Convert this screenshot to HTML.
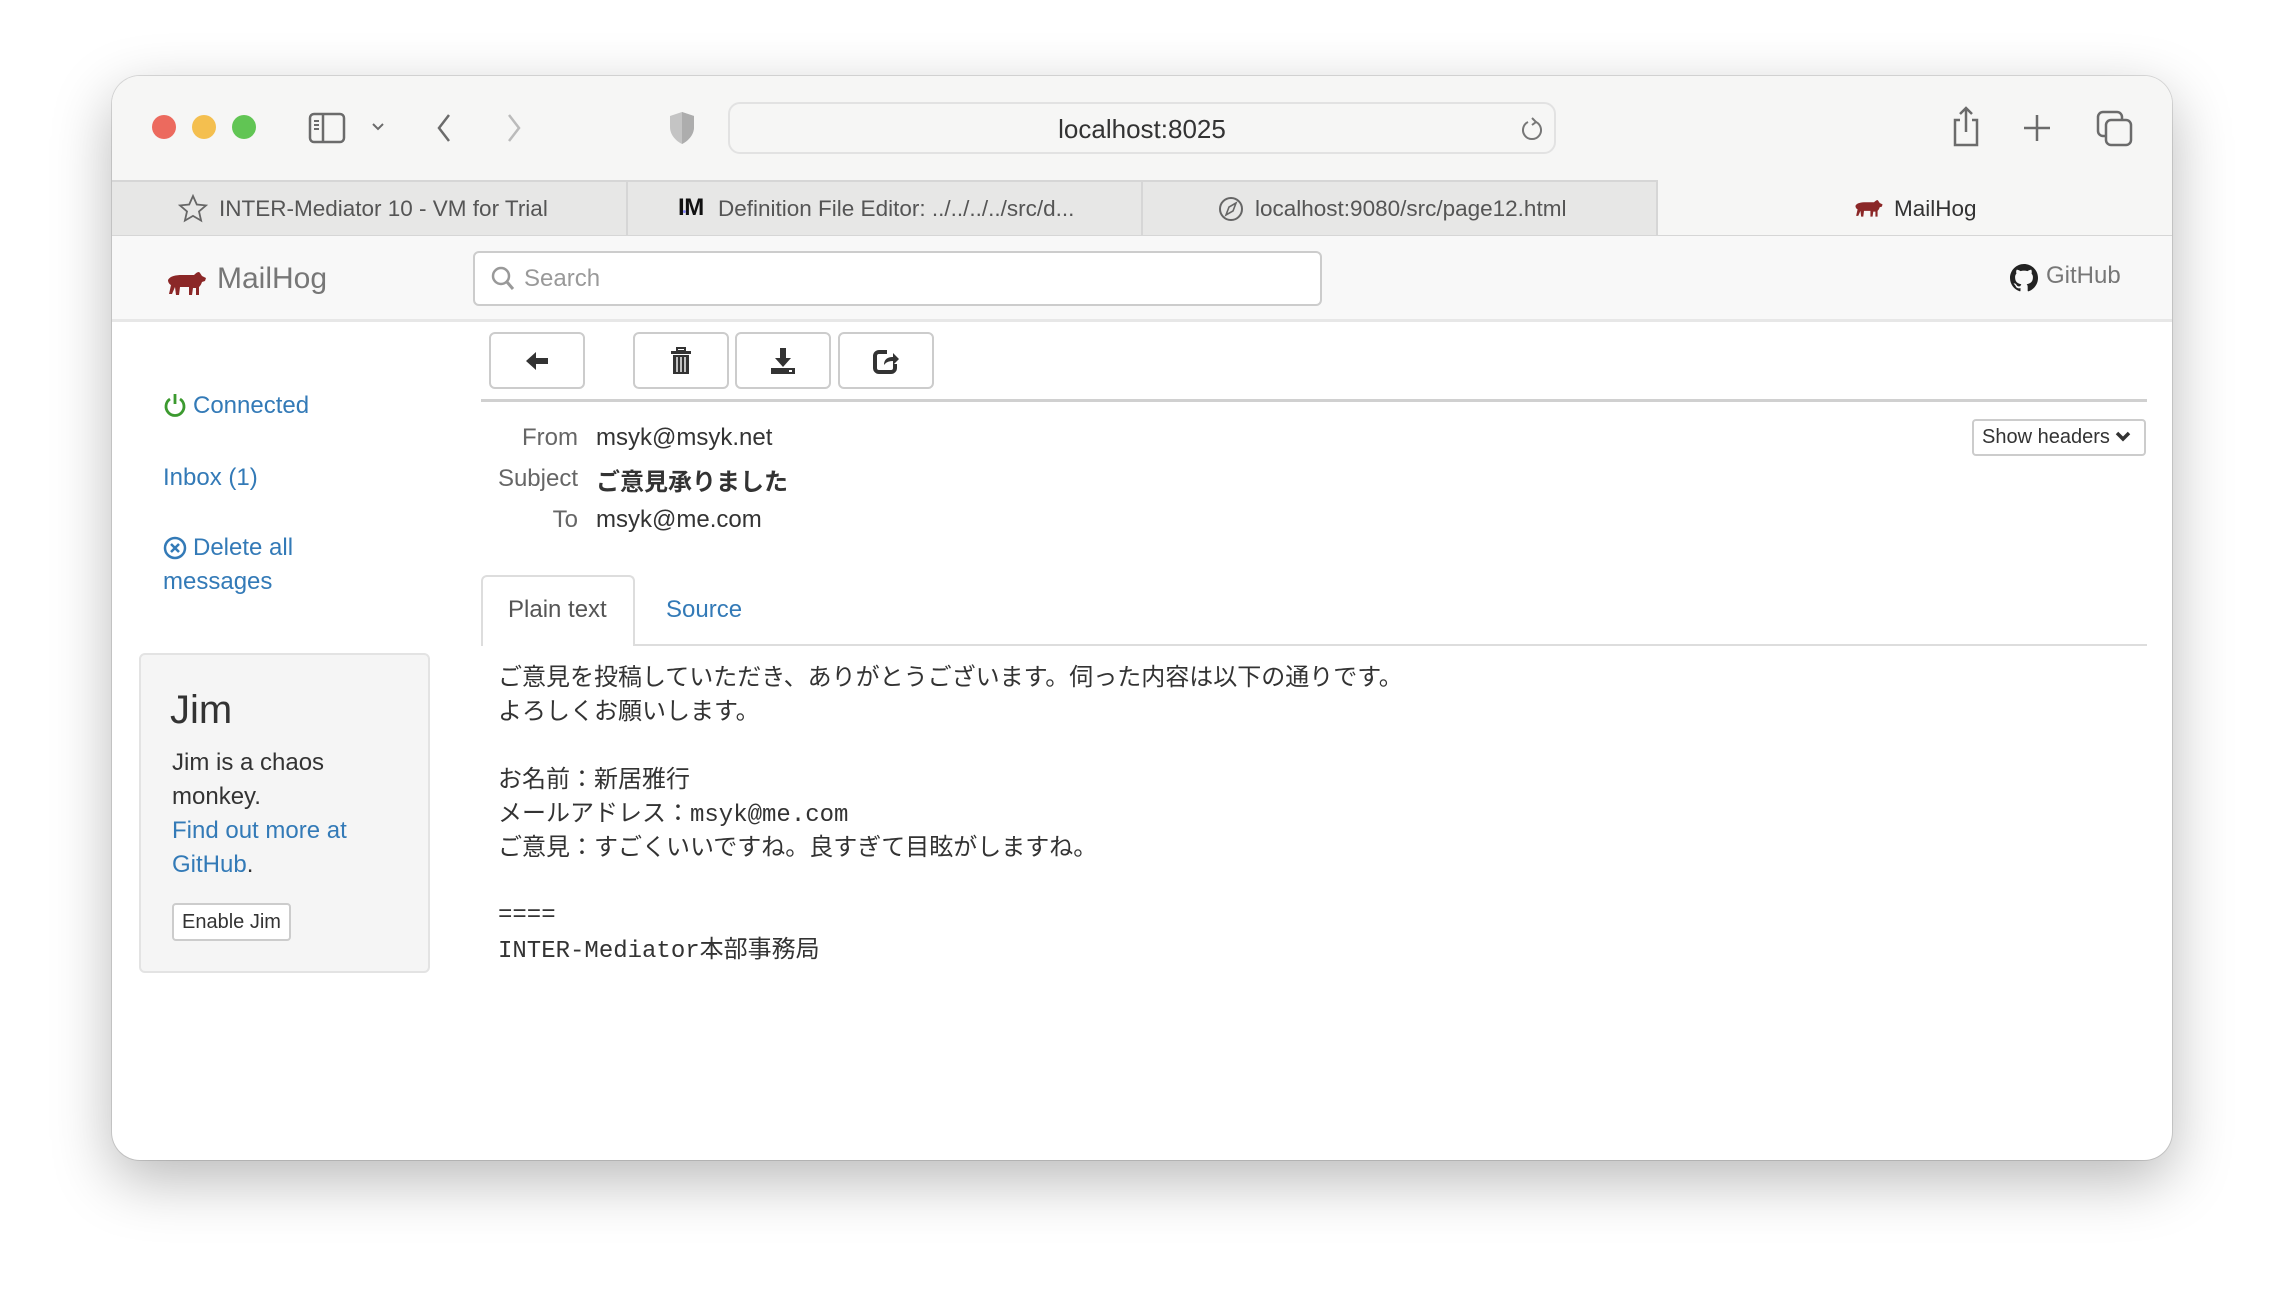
<!DOCTYPE html>
<html><head><meta charset="utf-8"><style>
*{margin:0;padding:0;box-sizing:border-box}
body{width:2284px;height:1308px;background:#fff;position:relative;overflow:hidden;font-family:"Liberation Sans","Noto Sans CJK JP",sans-serif;color:#333}
.a{position:absolute;white-space:nowrap}
#win{position:absolute;left:112px;top:76px;width:2060px;height:1084px;border-radius:28px;background:#fff;overflow:hidden;box-shadow:0 20px 60px rgba(0,0,0,.28),0 0 0 1px rgba(0,0,0,.12)}
.lk{color:#337ab7}
.btn{position:absolute;border:2px solid #ccc;border-radius:6px;background:#fff}
.btn svg{position:absolute;left:50%;top:50%;transform:translate(-50%,-50%)}
.hl{position:absolute;font-size:24px;color:#666;text-align:right;width:120px;left:346px}
.hv{position:absolute;font-size:24px;color:#333;left:484px}
.bd{position:absolute;left:386px;font-size:24px;color:#333;white-space:nowrap;line-height:34px}
.mono{font-family:"Liberation Mono",monospace;font-size:24px}
.tt{font-size:22.5px;color:#555}
</style></head><body>
<div id="win">
 <div class="a" style="left:0;top:0;width:2060px;height:104px;background:#f6f6f5"></div>
 <div class="a" style="left:40px;top:39px;width:24px;height:24px;border-radius:50%;background:#ec6a5e"></div>
 <div class="a" style="left:80px;top:39px;width:24px;height:24px;border-radius:50%;background:#f4bf4f"></div>
 <div class="a" style="left:120px;top:39px;width:24px;height:24px;border-radius:50%;background:#61c554"></div>
 <svg class="a" style="left:196px;top:36px" width="40" height="32" viewBox="0 0 40 32"><rect x="2" y="2" width="34" height="28" rx="4" fill="none" stroke="#6b6b6b" stroke-width="2.5"/><line x1="15" y1="2" x2="15" y2="30" stroke="#6b6b6b" stroke-width="2.5"/><path d="M6 9h5M6 13h5M6 17h5" stroke="#6b6b6b" stroke-width="2"/></svg>
 <svg class="a" style="left:258px;top:44px" width="16" height="14"><path d="M3 4l5 5 5-5" fill="none" stroke="#6b6b6b" stroke-width="2"/></svg>
 <svg class="a" style="left:322px;top:36px" width="20" height="32"><path d="M15 3L5 16l10 13" fill="none" stroke="#6b6b6b" stroke-width="2.5"/></svg>
 <svg class="a" style="left:392px;top:36px" width="20" height="32"><path d="M5 3l10 13L5 29" fill="none" stroke="#bbb" stroke-width="2.5"/></svg>
 <svg class="a" style="left:555px;top:34px" width="30" height="36" viewBox="0 0 30 36"><path d="M15 2L3 6v11c0 8 6 14 12 17 6-3 12-9 12-17V6z" fill="#c4c4c4"/><path d="M15 2v32c6-3 12-9 12-17V6z" fill="#adadad"/></svg>
 <div class="a" style="left:616px;top:26px;width:828px;height:52px;border-radius:12px;background:#f6f6f5;border:2px solid #e2e2e2"></div>
 <div class="a" style="left:616px;top:38px;width:828px;text-align:center;font-size:26px;color:#333">localhost:8025</div>
 <svg class="a" style="left:1408px;top:40px" width="24" height="28"><path d="M16 6a9 9 0 1 1-8 0" fill="none" stroke="#777" stroke-width="2"/><path d="M12 2l4 4-4 3" fill="none" stroke="#777" stroke-width="2"/></svg>
 <svg class="a" style="left:1838px;top:30px" width="32" height="42"><path d="M10 14H5v25h22V14h-5" fill="none" stroke="#6b6b6b" stroke-width="2.5"/><path d="M16 2v24M10 8l6-6 6 6" fill="none" stroke="#6b6b6b" stroke-width="2.5"/></svg>
 <svg class="a" style="left:1910px;top:37px" width="30" height="30"><path d="M15 2v26M2 15h26" stroke="#6b6b6b" stroke-width="2.5"/></svg>
 <svg class="a" style="left:1984px;top:34px" width="38" height="38"><rect x="2" y="2" width="24" height="24" rx="5" fill="none" stroke="#6b6b6b" stroke-width="2.5"/><rect x="10" y="10" width="25" height="25" rx="5" fill="#f6f6f5" stroke="#6b6b6b" stroke-width="2.5"/></svg>
 <div class="a" style="left:0;top:104px;width:1546px;height:56px;background:#e7e7e6;border-top:2px solid #d6d6d6;border-bottom:1px solid #d6d6d6"></div>
 <div class="a" style="left:1546px;top:104px;width:514px;height:56px;background:#f6f6f5;border-bottom:1px solid #d6d6d6"></div>
 <div class="a" style="left:514px;top:104px;width:2px;height:56px;background:#d6d6d6"></div>
 <div class="a" style="left:1029px;top:104px;width:2px;height:56px;background:#d6d6d6"></div>
 <div class="a" style="left:1544px;top:104px;width:2px;height:56px;background:#d6d6d6"></div>
 <svg class="a" style="left:66px;top:118px" width="30" height="30"><path d="M15 2l3.8 8.5 9.2.9-7 6.1 2.1 9.1L15 21.9l-8.1 4.7 2.1-9.1-7-6.1 9.2-.9z" fill="none" stroke="#666" stroke-width="1.8"/></svg>
 <div class="a tt" style="left:107px;top:120px">INTER-Mediator 10 - VM for Trial</div>
 <div class="a" style="left:566px;top:118px;font-size:24px;font-weight:bold;color:#111;letter-spacing:-2px">I<span style="color:#88f;font-size:10px">•</span>M</div>
 <div class="a tt" style="left:606px;top:120px">Definition File Editor: ../../../../src/d...</div>
 <svg class="a" style="left:1105px;top:119px" width="28" height="28"><circle cx="14" cy="14" r="11" fill="none" stroke="#666" stroke-width="2"/><path d="M19 8l-7 4-3 8 7-4z" fill="none" stroke="#666" stroke-width="1.6"/></svg>
 <div class="a tt" style="left:1143px;top:120px">localhost:9080/src/page12.html</div>
 <svg class="a" style="left:1742px;top:120px" width="30" height="24" viewBox="0 0 42 26"><path d="M2 10c2-4 8-5 14-5h12c3-3 5-4 6-2l2 3 4 2-1 3-3 1c-1 3-2 4-3 5v8h-3v-7h-3l-1 7h-3v-8H14l-1 8h-3l-1-8-3 7H3l2-9C3 14 2 12 2 10z" fill="#8b2727"/></svg>
 <div class="a tt" style="left:1782px;top:120px;color:#333">MailHog</div>
 <div class="a" style="left:0;top:160px;width:2060px;height:86px;background:#f8f8f8;border-bottom:3px solid #e7e7e7"></div>
 <svg class="a" style="left:54px;top:194px" width="42" height="26" viewBox="0 0 42 26"><path d="M2 10c2-4 8-5 14-5h12c3-3 5-4 6-2l2 3 4 2-1 3-3 1c-1 3-2 4-3 5v8h-3v-7h-3l-1 7h-3v-8H14l-1 8h-3l-1-8-3 7H3l2-9C3 14 2 12 2 10z" fill="#8b2727"/></svg>
 <div class="a" style="left:105px;top:186px;font-size:30px;color:#777">MailHog</div>
 <div class="a" style="left:361px;top:175px;width:849px;height:55px;background:#fff;border:2px solid #ccc;border-radius:6px"></div>
 <svg class="a" style="left:378px;top:189px" width="26" height="28"><circle cx="11" cy="11" r="8" fill="none" stroke="#999" stroke-width="2.5"/><path d="M17 17l6 7" stroke="#999" stroke-width="3"/></svg>
 <div class="a" style="left:412px;top:189px;font-size:24px;color:#999">Search</div>
 <svg class="a" style="left:1898px;top:188px" width="28" height="28" viewBox="0 0 16 16"><path fill="#222" d="M8 0C3.6 0 0 3.6 0 8c0 3.5 2.3 6.5 5.5 7.6.4.1.5-.2.5-.4v-1.4c-2.2.5-2.7-1-2.7-1-.4-.9-.9-1.2-.9-1.2-.7-.5.1-.5.1-.5.8.1 1.2.8 1.2.8.7 1.3 1.9.9 2.3.7.1-.5.3-.9.5-1.1-1.8-.2-3.6-.9-3.6-4 0-.9.3-1.6.8-2.1-.1-.2-.4-1 .1-2.1 0 0 .7-.2 2.2.8.6-.2 1.3-.3 2-.3s1.4.1 2 .3c1.5-1 2.2-.8 2.2-.8.4 1.1.2 1.9.1 2.1.5.6.8 1.3.8 2.1 0 3.1-1.9 3.8-3.6 4 .3.3.6.8.6 1.5v2.2c0 .2.1.5.6.4C13.7 14.5 16 11.5 16 8c0-4.4-3.6-8-8-8z"/></svg>
 <div class="a" style="left:1934px;top:186px;font-size:24px;color:#777">GitHub</div>
 <svg class="a" style="left:51px;top:316px" width="24" height="26"><path d="M7 7a9 9 0 1 0 10 0" fill="none" stroke="#3c9a2f" stroke-width="2.8"/><path d="M12 2v10" stroke="#3c9a2f" stroke-width="2.8"/></svg>
 <div class="a lk" style="left:81px;top:316px;font-size:24px">Connected</div>
 <div class="a lk" style="left:51px;top:388px;font-size:24px">Inbox (1)</div>
 <svg class="a" style="left:51px;top:460px" width="24" height="24"><circle cx="12" cy="12" r="10" fill="none" stroke="#337ab7" stroke-width="2.5"/><path d="M8 8l8 8M16 8l-8 8" stroke="#337ab7" stroke-width="2.5"/></svg>
 <div class="a lk" style="left:81px;top:458px;font-size:24px">Delete all</div>
 <div class="a lk" style="left:51px;top:492px;font-size:24px">messages</div>
 <div class="a" style="left:27px;top:577px;width:291px;height:320px;background:#f5f5f5;border:2px solid #e3e3e3;border-radius:6px"></div>
 <div class="a" style="left:58px;top:612px;font-size:40px;color:#333;font-weight:500">Jim</div>
 <div class="a" style="left:60px;top:670px;font-size:24px;line-height:34px;white-space:normal;width:200px">Jim is a chaos monkey.<br><span class="lk">Find out more at GitHub</span>.</div>
 <div class="a" style="left:60px;top:827px;width:119px;height:38px;background:#fff;border:2px solid #ccc;border-radius:4px;font-size:20px;text-align:center;line-height:34px">Enable Jim</div>
 <div class="btn" style="left:377px;top:256px;width:96px;height:57px"><svg width="24" height="22" viewBox="0 0 24 22"><path d="M1 11L11 2v6h12v6H11v6z" fill="#333"/></svg></div>
 <div class="btn" style="left:521px;top:256px;width:96px;height:57px"><svg width="22" height="28" viewBox="0 0 22 28"><rect x="7" y="1" width="8" height="3" fill="none" stroke="#333" stroke-width="2"/><rect x="1" y="4" width="20" height="3" fill="#333"/><rect x="3" y="8" width="16" height="19" fill="#333"/><path d="M7 10v15M11 10v15M15 10v15" stroke="#fff" stroke-width="1.4"/></svg></div>
 <div class="btn" style="left:623px;top:256px;width:96px;height:57px"><svg width="24" height="28" viewBox="0 0 24 28"><path d="M9 1h6v10h5l-8 9-8-9h5z" fill="#333"/><rect x="0" y="21" width="24" height="6" fill="#333"/><rect x="18" y="23" width="3" height="2" fill="#fff"/></svg></div>
 <div class="btn" style="left:726px;top:256px;width:96px;height:57px"><svg width="26" height="26" viewBox="0 0 26 26"><path d="M14 4H6a4 4 0 0 0-4 4v12a4 4 0 0 0 4 4h12a4 4 0 0 0 4-4v-4" fill="none" stroke="#333" stroke-width="4"/><path d="M11 17c0-6 4-8 9-8V5l6 6-6 6v-4c-4 0-7 1-9 4z" fill="#333"/></svg></div>
 <div class="a" style="left:369px;top:323px;width:1666px;height:3px;background:#d0d0d0"></div>
 <div class="hl" style="top:348px">From</div><div class="hv" style="top:348px">msyk@msyk.net</div>
 <div class="hl" style="top:389px">Subject</div><div class="hv" style="top:386px;font-weight:bold">ご意見承りました</div>
 <div class="hl" style="top:430px">To</div><div class="hv" style="top:430px">msyk@me.com</div>
 <div class="a" style="left:1860px;top:343px;width:174px;height:37px;border:2px solid #ccc;border-radius:4px;font-size:20px;line-height:33px;padding-left:8px;color:#333">Show headers <svg width="16" height="14" style="vertical-align:-1px"><path d="M2 3l6 6 6-6" fill="none" stroke="#333" stroke-width="3.5"/></svg></div>
 <div class="a" style="left:369px;top:568px;width:1666px;height:2px;background:#ddd"></div>
 <div class="a" style="left:369px;top:499px;width:154px;height:71px;background:#fff;border:2px solid #ddd;border-bottom:none;border-radius:6px 6px 0 0"></div>
 <div class="a" style="left:396px;top:520px;font-size:24px;color:#555">Plain text</div>
 <div class="a lk" style="left:554px;top:520px;font-size:24px">Source</div>
 <div class="bd" style="top:585px">ご意見を投稿していただき、ありがとうございます。伺った内容は以下の通りです。</div>
 <div class="bd" style="top:619px">よろしくお願いします。</div>
 <div class="bd" style="top:687px">お名前：新居雅行</div>
 <div class="bd" style="top:721px">メールアドレス：<span class="mono">msyk@me.com</span></div>
 <div class="bd" style="top:755px">ご意見：すごくいいですね。良すぎて目眩がしますね。</div>
 <div class="bd mono" style="top:823px">====</div>
 <div class="bd" style="top:857px"><span class="mono">INTER-Mediator</span>本部事務局</div>
</div>
</body></html>
